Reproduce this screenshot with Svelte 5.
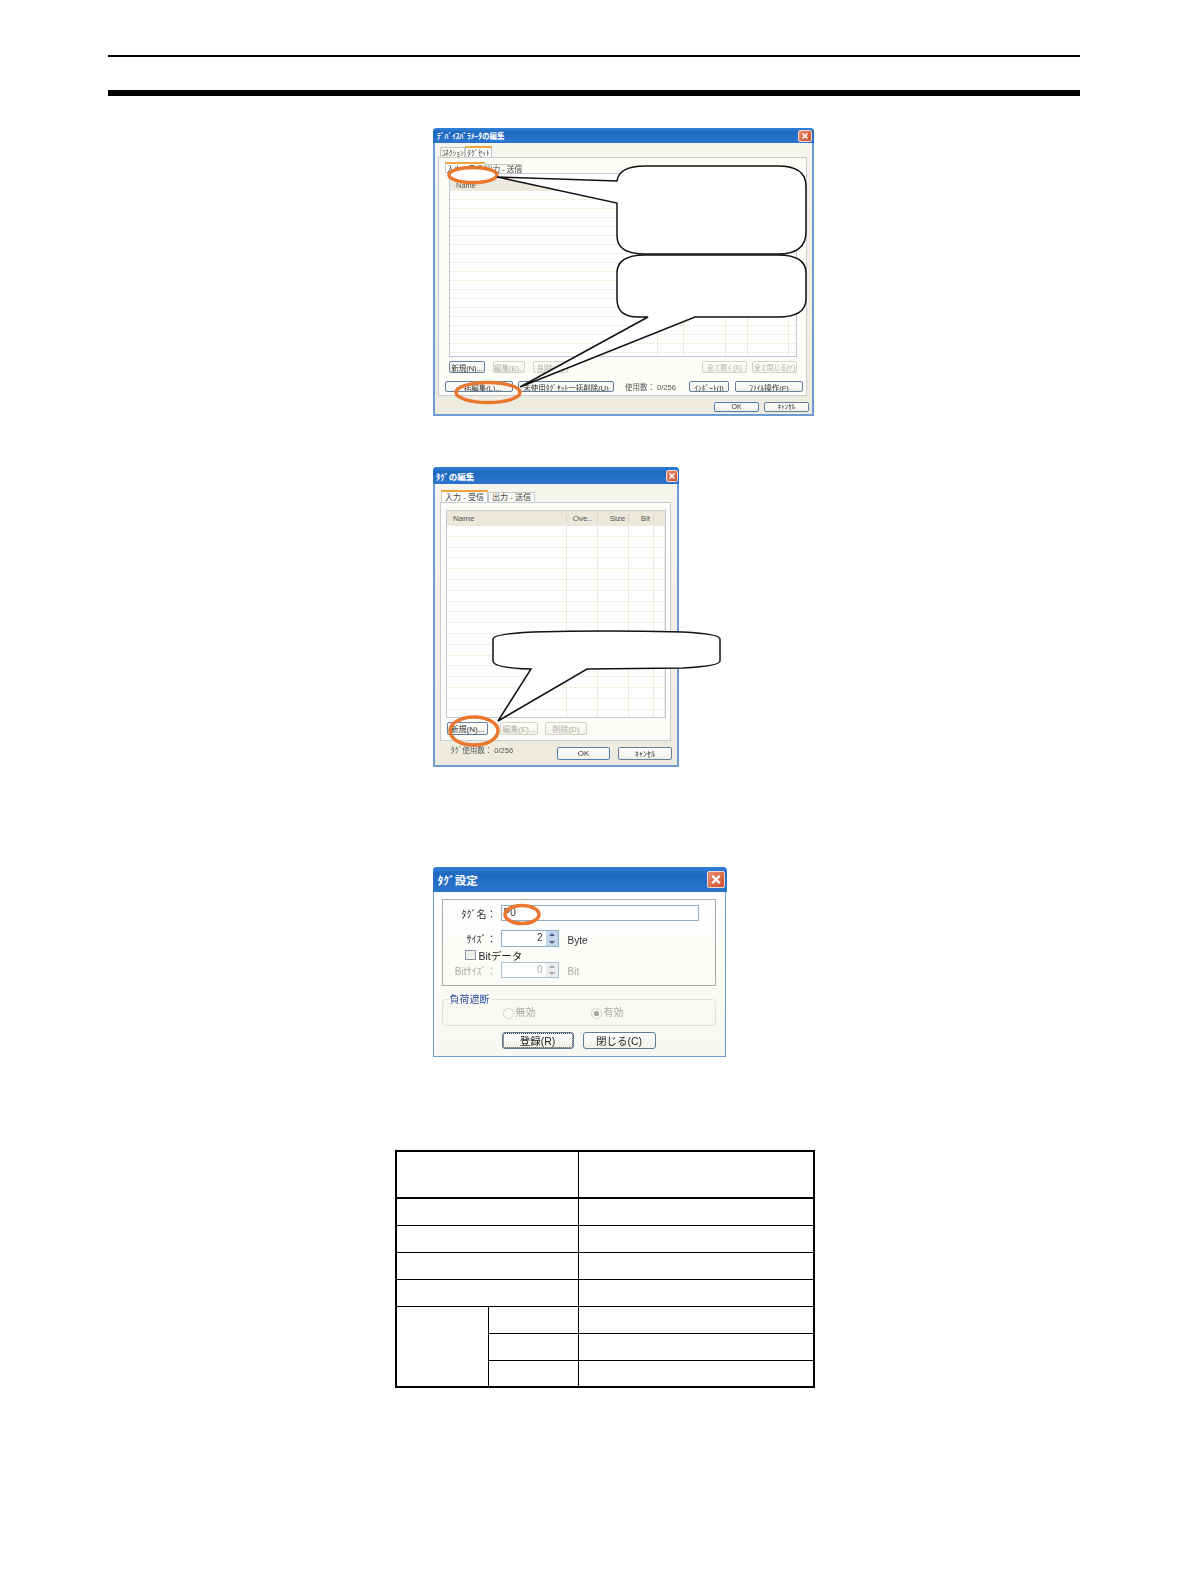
<script lang="ts">
  const deviceCols = [208, 26, 42, 22, 41];
  const tagCols = [121, 31, 32, 25, 11];
  const tagHead = ['Name', 'Ove..', 'Size', 'Bit', ''];
  const tableRows = 4;
  const subRows = 3;
</script>

{#snippet closeBtn()}
  <span class="close">
    <svg viewBox="0 0 12 12"><path d="M3 3 L9 9 M9 3 L3 9" /></svg>
  </span>
{/snippet}

{#snippet listBody(cols)}
  <div class="list-body">
    {#each cols as w}
      <div class="list-col" style="width:{w}px"></div>
    {/each}
  </div>
{/snippet}

<div class="page">
  <div class="rule-thin"></div>
  <div class="rule-thick"></div>

  <!-- device parameter dialog -->
  <div class="figure fig-device">
    <div class="dialog device">
      <div class="title"><span>ﾃﾞﾊﾞｲｽﾊﾟﾗﾒｰﾀの編集</span>{@render closeBtn()}</div>
      <div class="tabs">
        <span class="tab">ｺﾈｸｼｮﾝ</span>
        <span class="tab active">ﾀｸﾞｾｯﾄ</span>
      </div>
      <div class="panel">
        <div class="tabs inner">
          <span class="tab active">入力 - 受信</span>
          <span class="tab">出力 - 送信</span>
        </div>
        <div class="list">
          <div class="list-head"><span>Name</span></div>
          {@render listBody(deviceCols)}
        </div>
        <div class="btn-row row-a">
          <button class="b36">新規(N)...</button>
          <button class="off b32">編集(E)...</button>
          <button class="off b35">削除(D)</button>
          <button class="off b45 tiny push">全て開く(X)</button>
          <button class="off b45 tiny">全て閉じる(Y)</button>
        </div>
        <div class="btn-row row-b">
          <button class="b68">一括編集(L)...</button>
          <button class="b96">未使用ﾀｸﾞｾｯﾄ一括削除(U)</button>
          <span class="count">使用数： 0/256</span>
          <button class="b40 push">ｲﾝﾎﾟｰﾄ(I)</button>
          <button class="b68">ﾌｧｲﾙ操作(F)</button>
        </div>
      </div>
      <div class="btn-row foot">
        <button class="b45 main">OK</button>
        <button class="b45">ｷｬﾝｾﾙ</button>
      </div>
    </div>
    <svg class="overlay" viewBox="0 0 381 288">
      <ellipse class="mark filled" cx="40" cy="47" rx="24" ry="7.5" />
      <path class="bubble" d="M184 53 Q186 38 212 38 L345 38 Q373 38 373 58 L373 104 Q373 126 345 126 L212 126 Q184 126 184 108 L184 75 L64 49 Z" />
      <path class="bubble" d="M184 145 Q184 127 212 127 L345 127 Q373 127 373 145 L373 171 Q373 189 345 189 L262 189 L87 259 L215 189 L205 189 Q184 189 184 171 Z" />
      <ellipse class="mark" cx="55" cy="264.5" rx="32" ry="10" />
    </svg>
  </div>

  <!-- tag edit dialog -->
  <div class="figure fig-tag">
    <div class="dialog tag">
      <div class="title"><span>ﾀｸﾞの編集</span>{@render closeBtn()}</div>
      <div class="tabs">
        <span class="tab active">入力 - 受信</span>
        <span class="tab">出力 - 送信</span>
      </div>
      <div class="panel">
        <div class="list">
          <div class="list-head">
            {#each tagHead as label, i}
              <span class="head-cell" style="width:{tagCols[i]}px">{label}</span>
            {/each}
          </div>
          {@render listBody(tagCols)}
        </div>
        <div class="btn-row">
          <button class="b41">新規(N)...</button>
          <button class="off b38">編集(E)...</button>
          <button class="off b42">削除(D)</button>
        </div>
      </div>
      <div class="btn-row foot">
        <span class="count">ﾀｸﾞ使用数： 0/256</span>
        <button class="b53 main">OK</button>
        <button class="b54">ｷｬﾝｾﾙ</button>
      </div>
    </div>
    <svg class="overlay" viewBox="0 0 246 300">
      <path class="bubble" d="M60 172 Q60 167 100 165 Q170 163 250 165 Q287 167 287 172 L287 194 Q287 199 250 201 L154 202 L65 254 L98 202 Q60 201 60 194 Z" />
      <ellipse class="mark" cx="41" cy="264" rx="24" ry="14" />
    </svg>
  </div>

  <!-- tag settings dialog -->
  <div class="figure fig-set">
    <div class="dialog set">
      <div class="title"><span>ﾀｸﾞ設定</span>{@render closeBtn()}</div>
      <div class="group">
        <div class="field f-name">
          <span class="label">ﾀｸﾞ名：</span>
          <span class="input wide">P0</span>
        </div>
        <div class="field f-size">
          <span class="label">ｻｲｽﾞ：</span>
          <span class="input spin">2<span class="spinner"><i class="up"></i><i class="down"></i></span></span>
          <span class="unit">Byte</span>
        </div>
        <div class="check"><span class="box"></span>Bitデータ</div>
        <div class="field f-bit">
          <span class="label dim">Bitｻｲｽﾞ：</span>
          <span class="input spin dim">0<span class="spinner"><i class="up"></i><i class="down"></i></span></span>
          <span class="unit dim">Bit</span>
        </div>
      </div>
      <div class="group2">
        <span class="legend">負荷遮断</span>
        <span class="radio r1"><span class="dot"></span>無効</span>
        <span class="radio r2"><span class="dot on"></span>有効</span>
      </div>
      <div class="btn-row set-btns">
        <button class="big focus">登録(R)</button>
        <button class="big wider">閉じる(C)</button>
      </div>
    </div>
    <svg class="overlay" viewBox="0 0 293 190">
      <ellipse class="mark" cx="89" cy="47.5" rx="17" ry="9" />
    </svg>
  </div>

  <table class="spec">
    <colgroup>
      <col class="c1" /><col class="c2" /><col class="c3" />
    </colgroup>
    <tbody>
      <tr class="head"><td colspan="2"></td><td></td></tr>
      {#each Array(tableRows) as _}
        <tr><td colspan="2"></td><td></td></tr>
      {/each}
      {#each Array(subRows) as _, i}
        <tr>
          {#if i === 0}<td rowspan={subRows}></td>{/if}
          <td></td><td></td>
        </tr>
      {/each}
    </tbody>
  </table>
</div>

<style>
  :global(body) {
    margin: 0;
    background: #fff;
  }

  .page {
    min-height: 1586px;
    padding-top: 55px;
    box-sizing: border-box;
    font-family: "Liberation Sans", "Noto Sans CJK JP", sans-serif;
    color: #333;
  }

  .rule-thin,
  .rule-thick {
    margin: 0 110px 0 108px;
    background: #000;
  }
  .rule-thin { height: 2px; }
  .rule-thick { height: 6px; margin-top: 33px; }

  .figure {
    position: relative;
    margin-left: 433px;
  }
  .fig-device { width: 381px; height: 288px; margin-top: 32px; }
  .fig-tag { width: 246px; height: 300px; margin-top: 51px; }
  .fig-set { width: 293px; height: 190px; margin-top: 100px; }

  .overlay {
    position: absolute;
    left: 0;
    top: 0;
    width: 100%;
    height: 100%;
    overflow: visible;
  }
  .bubble {
    fill: #fff;
    stroke: #111;
    stroke-width: 1.5;
    stroke-linejoin: miter;
  }
  .mark {
    fill: none;
    stroke: #e9772e;
    stroke-width: 3.5;
  }
  .mark.filled { fill: #fff; }

  .dialog {
    box-sizing: border-box;
    width: 100%;
    height: 100%;
    display: flex;
    flex-direction: column;
    border: 2px solid #6d9bd6;
    border-top: 0;
    border-radius: 4px 4px 0 0;
    background: linear-gradient(#f7f6ef, #ecebdd);
    filter: blur(0.4px);
    font-size: 7.5px;
  }

  .title {
    display: flex;
    align-items: center;
    justify-content: space-between;
    margin: 0 -2px;
    padding: 0 2px 0 4px;
    border-radius: 4px 4px 0 0;
    background: linear-gradient(#2f80d6, #1f68c0 30%, #2a74cb 90%);
    color: #fff;
    font-weight: 700;
    font-size: 7.5px;
    white-space: nowrap;
  }
  .close {
    box-sizing: border-box;
    display: flex;
    border: 1px solid #f0d8d0;
    border-radius: 2px;
    background: linear-gradient(135deg, #e58f70, #cf4f2c);
  }
  .close svg { width: 100%; height: 100%; }
  .close path { stroke: #fff; stroke-width: 1.8; fill: none; }

  .tabs {
    display: flex;
    align-items: flex-end;
  }
  .tab {
    box-sizing: border-box;
    display: flex;
    align-items: center;
    justify-content: center;
    padding-bottom: 1px;
    border: 1px solid #c4c8c8;
    border-bottom: 0;
    background: #fafaf4;
    white-space: nowrap;
    color: #444;
  }
  .tab.active {
    border-top: 2px solid #eda63a;
    background: #fff;
  }

  .panel {
    box-sizing: border-box;
    display: flex;
    flex-direction: column;
    border: 1px solid #c8ccd0;
    background: #fcfcf9;
  }

  .list {
    box-sizing: border-box;
    display: flex;
    flex-direction: column;
    border: 1px solid #c0cad6;
    background: #fff;
  }
  .list-head {
    display: flex;
    align-items: center;
    flex: none;
    background: #ece9dc;
    color: #555;
  }
  .head-cell {
    box-sizing: border-box;
    padding-left: 6px;
    border-right: 1px solid #d6d3c6;
  }
  .head-cell:nth-child(3),
  .head-cell:nth-child(4) {
    padding: 0 3px 0 0;
    text-align: right;
  }
  .list-body {
    flex: 1;
    display: flex;
    min-height: 0;
  }
  .list-col {
    box-sizing: border-box;
    border-right: 1px solid #ecebe0;
  }

  .btn-row {
    display: flex;
    align-items: center;
  }
  .push { margin-left: auto; }
  .count { color: #555; white-space: nowrap; }

  button {
    box-sizing: border-box;
    height: 100%;
    padding: 0;
    border: 1px solid #64809e;
    border-radius: 2px;
    background: linear-gradient(#fff, #f2f1e8);
    font: inherit;
    color: #333;
    white-space: nowrap;
    overflow: hidden;
  }
  button.off {
    border-color: #d4d3c8;
    color: #b2b2aa;
  }
  button.main { border-color: #4f7fb8; }
  button.tiny { font-size: 6.5px; }

  .b32 { width: 32px; }
  .b35 { width: 35px; }
  .b36 { width: 36px; }
  .b38 { width: 38px; }
  .b40 { width: 40px; }
  .b41 { width: 41px; }
  .b42 { width: 42px; }
  .b45 { width: 45px; }
  .b53 { width: 53px; }
  .b54 { width: 54px; }
  .b68 { width: 68px; }
  .b96 { width: 96px; }

  /* first dialog */
  .device .title { height: 15px; flex: none; padding-left: 4px; }
  .device .close { width: 14px; height: 12px; }
  .device > .tabs { margin: 3px 0 0 5px; height: 11px; }
  .device > .tabs .tab { height: 10px; width: 25px; }
  .device > .tabs .tab.active { height: 11px; width: 27px; }
  .device .panel { margin: 0 5px 0 3px; height: 239px; }
  .device .inner { margin: 4px 0 0 6px; height: 11px; }
  .device .inner .tab { width: 37px; height: 9px; }
  .device .inner .tab.active { width: 40px; height: 11px; }
  .device .list {
    margin: 0 9px 0 10px;
    height: 184px;
  }
  .device .list-head { margin-top: 6px; height: 11px; padding-left: 6px; }
  .device .list-body {
    background: repeating-linear-gradient(#fff 0 8px, #f3f0e2 8px 9px);
  }
  .row-a { margin: 4px 9px 0 10px; height: 12px; gap: 8px; }
  .row-a .off.b45 + .off.b45 { margin-left: -3px; }
  .row-b { margin: 8px 3px 0 6px; height: 11px; gap: 5px; }
  .row-b .count { margin-left: 6px; }
  .row-b .b68:last-child { margin-left: 1px; }
  .device .foot {
    margin: 6px 3px 0 auto;
    height: 10px;
    gap: 5px;
    font-size: 7px;
    line-height: 8px;
  }

  /* second dialog */
  .tag { font-size: 8px; }
  .tag .title { height: 17px; flex: none; font-size: 8.5px; padding: 0 1px 0 3px; }
  .tag .close { width: 12px; height: 12px; }
  .tag > .tabs { margin: 6px 0 0 6px; height: 12px; }
  .tag > .tabs .tab { width: 47px; height: 10px; padding-bottom: 2px; }
  .tag > .tabs .tab.active { height: 12px; }
  .tag .panel { margin: 0 6px 0 5px; height: 239px; }
  .tag .list { margin: 7px 4px 0 5px; height: 208px; }
  .tag .list-head { height: 15px; }
  .tag .list-body {
    background: repeating-linear-gradient(#fff 0 9.8px, #f3f0e2 9.8px 10.8px);
  }
  .tag .panel .btn-row { margin: 4px 0 0 6px; height: 13px; }
  .tag .b38 { margin-left: 12px; }
  .tag .b42 { margin-left: 7px; }
  .tag .foot { margin-top: 6px; height: 13px; padding-left: 16px; }
  .tag .foot .b53 { margin-left: auto; }
  .tag .foot .b54 { margin: 0 5px 0 8px; }
  .tag .foot .count { transform: translateY(-4px); font-size: 7.5px; }

  /* third dialog */
  .set {
    font-size: 10px;
    background: linear-gradient(#fff, #f8f8f2);
    border-width: 1.5px;
    border-top: 0;
  }
  .set .title { height: 25px; flex: none; font-size: 11.5px; padding: 0 1.5px 0 5px; margin: 0 -1.5px; }
  .set .close { width: 18px; height: 17px; }
  .group {
    box-sizing: border-box;
    height: 87px;
    margin: 7px 9px 0 7.5px;
    padding-top: 5px;
    border: 1px solid #aaa;
  }
  .field {
    display: flex;
    align-items: center;
  }
  .label {
    width: 54px;
    margin-right: 4px;
    text-align: right;
    white-space: nowrap;
  }
  .input {
    box-sizing: border-box;
    height: 100%;
    border: 1px solid #8fb0c8;
    background: #fff;
    line-height: 14px;
    padding: 0 2px;
  }
  .input.wide { width: 198px; }
  .f-name { height: 16px; }
  .f-size { height: 17px; margin-top: 9px; }
  .f-bit { height: 16px; margin-top: 2px; }
  .spin {
    width: 58px;
    display: flex;
    justify-content: flex-end;
    gap: 3px;
    padding-right: 0;
  }
  .spinner {
    width: 12px;
    display: flex;
    flex-direction: column;
    align-items: center;
    justify-content: space-around;
    background: #c6d6ee;
  }
  .spinner i {
    width: 0;
    height: 0;
    border: 3px solid transparent;
  }
  .spinner .up { border-top: 0; border-bottom-color: #4d6185; }
  .spinner .down { border-bottom: 0; border-top-color: #4d6185; }
  .unit { margin: 3px 0 0 9px; }
  .dim { color: #aaa; }
  .spin.dim { border-color: #a8c0d2; }
  .spin.dim .spinner { background: #ececea; }
  .spin.dim .spinner i { opacity: 0.5; }
  .check {
    display: flex;
    align-items: center;
    gap: 3px;
    height: 10px;
    margin: 3px 0 0 22px;
    font-size: 10.5px;
    color: #222;
  }
  .box {
    box-sizing: border-box;
    width: 11px;
    height: 10px;
    border: 1px solid #8a9aa8;
    background: #f0f0e8;
  }
  .group2 {
    position: relative;
    box-sizing: border-box;
    height: 27px;
    margin: 13px 9px 0 7.5px;
    border: 1px solid #e2e1d4;
    border-radius: 4px;
    background: #f9f8f3;
    color: #aaa;
  }
  .legend {
    position: absolute;
    left: 7px;
    top: -7px;
    padding: 0 2px 0 0;
    background: #fbfbf6;
    color: #2a4aa0;
    font-size: 10px;
    line-height: 13px;
  }
  .radio {
    position: absolute;
    top: 7px;
    display: flex;
    align-items: center;
    gap: 2px;
    line-height: 12px;
  }
  .r1 { left: 60px; }
  .r2 { left: 148px; }
  .dot {
    box-sizing: border-box;
    width: 11px;
    height: 11px;
    border: 1px solid #d4d4ca;
    border-radius: 50%;
    background: #fbfbf8;
  }
  .dot.on { background: radial-gradient(#a8a8a0 0 2.5px, #fbfbf8 3px); }
  .set-btns { margin: 6px 0 0 67.5px; height: 17px; gap: 9px; font-size: 10.5px; }
  .big { width: 72px; color: #222; border-color: #5d7a96; border-radius: 3px; }
  .big.wider { width: 73px; }
  .big.focus { outline: 1px dotted #333; outline-offset: -2px; }

  /* table */
  .spec {
    box-sizing: border-box;
    width: 420px;
    margin: 93px 0 0 395px;
    border: 2px solid #000;
    border-collapse: separate;
    border-spacing: 0;
    table-layout: fixed;
  }
  .c1 { width: 92px; }
  .c2 { width: 90px; }
  .spec td {
    box-sizing: border-box;
    height: 27px;
    padding: 0;
    border-right: 1px solid #000;
    border-bottom: 1px solid #000;
  }
  .spec td:last-child { border-right: 0; }
  .spec tr:last-child td { border-bottom: 0; height: 25px; }
  .spec td[rowspan] { border-bottom: 0; height: 77px; }
  .spec .head td {
    height: 47px;
    border-bottom-width: 2px;
  }
</style>
